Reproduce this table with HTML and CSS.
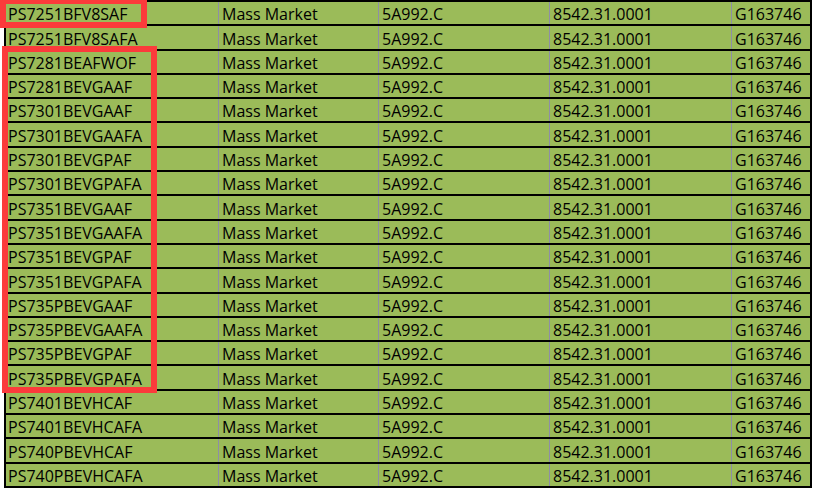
FILE: index.html
```html
<!DOCTYPE html>
<html>
<head>
<meta charset="utf-8">
<link rel="stylesheet" href="styles.css">
</head>
<body>
<div class="page">
  <div class="sheet">
    <div class="row"><div class="c a">PS7251BFV8SAF</div><div class="c">Mass Market</div><div class="c">5A992.C</div><div class="c">8542.31.0001</div><div class="c">G163746</div></div>
    <div class="row"><div class="c a">PS7251BFV8SAFA</div><div class="c">Mass Market</div><div class="c">5A992.C</div><div class="c">8542.31.0001</div><div class="c">G163746</div></div>
    <div class="row"><div class="c a">PS7281BEAFWOF</div><div class="c">Mass Market</div><div class="c">5A992.C</div><div class="c">8542.31.0001</div><div class="c">G163746</div></div>
    <div class="row"><div class="c a">PS7281BEVGAAF</div><div class="c">Mass Market</div><div class="c">5A992.C</div><div class="c">8542.31.0001</div><div class="c">G163746</div></div>
    <div class="row"><div class="c a">PS7301BEVGAAF</div><div class="c">Mass Market</div><div class="c">5A992.C</div><div class="c">8542.31.0001</div><div class="c">G163746</div></div>
    <div class="row"><div class="c a">PS7301BEVGAAFA</div><div class="c">Mass Market</div><div class="c">5A992.C</div><div class="c">8542.31.0001</div><div class="c">G163746</div></div>
    <div class="row"><div class="c a">PS7301BEVGPAF</div><div class="c">Mass Market</div><div class="c">5A992.C</div><div class="c">8542.31.0001</div><div class="c">G163746</div></div>
    <div class="row"><div class="c a">PS7301BEVGPAFA</div><div class="c">Mass Market</div><div class="c">5A992.C</div><div class="c">8542.31.0001</div><div class="c">G163746</div></div>
    <div class="row"><div class="c a">PS7351BEVGAAF</div><div class="c">Mass Market</div><div class="c">5A992.C</div><div class="c">8542.31.0001</div><div class="c">G163746</div></div>
    <div class="row"><div class="c a">PS7351BEVGAAFA</div><div class="c">Mass Market</div><div class="c">5A992.C</div><div class="c">8542.31.0001</div><div class="c">G163746</div></div>
    <div class="row"><div class="c a">PS7351BEVGPAF</div><div class="c">Mass Market</div><div class="c">5A992.C</div><div class="c">8542.31.0001</div><div class="c">G163746</div></div>
    <div class="row"><div class="c a">PS7351BEVGPAFA</div><div class="c">Mass Market</div><div class="c">5A992.C</div><div class="c">8542.31.0001</div><div class="c">G163746</div></div>
    <div class="row"><div class="c a">PS735PBEVGAAF</div><div class="c">Mass Market</div><div class="c">5A992.C</div><div class="c">8542.31.0001</div><div class="c">G163746</div></div>
    <div class="row"><div class="c a">PS735PBEVGAAFA</div><div class="c">Mass Market</div><div class="c">5A992.C</div><div class="c">8542.31.0001</div><div class="c">G163746</div></div>
    <div class="row"><div class="c a">PS735PBEVGPAF</div><div class="c">Mass Market</div><div class="c">5A992.C</div><div class="c">8542.31.0001</div><div class="c">G163746</div></div>
    <div class="row"><div class="c a">PS735PBEVGPAFA</div><div class="c">Mass Market</div><div class="c">5A992.C</div><div class="c">8542.31.0001</div><div class="c">G163746</div></div>
    <div class="row"><div class="c a">PS7401BEVHCAF</div><div class="c">Mass Market</div><div class="c">5A992.C</div><div class="c">8542.31.0001</div><div class="c">G163746</div></div>
    <div class="row"><div class="c a">PS7401BEVHCAFA</div><div class="c">Mass Market</div><div class="c">5A992.C</div><div class="c">8542.31.0001</div><div class="c">G163746</div></div>
    <div class="row"><div class="c a">PS740PBEVHCAF</div><div class="c">Mass Market</div><div class="c">5A992.C</div><div class="c">8542.31.0001</div><div class="c">G163746</div></div>
    <div class="row"><div class="c a">PS740PBEVHCAFA</div><div class="c">Mass Market</div><div class="c">5A992.C</div><div class="c">8542.31.0001</div><div class="c">G163746</div></div>
  </div>
  <div class="mark mark-one"></div>
  <div class="mark mark-two"></div>
</div>
</body>
</html>
```
FILE: styles.css
```css
html, body {
  margin: 0;
  padding: 0;
  background: #ffffff;
}

.page {
  position: relative;
  width: 813px;
  height: 492px;
  overflow: hidden;
}

.sheet {
  margin-left: 4px;
  width: 808px;
  box-sizing: border-box;
  border-left: 2px solid #000;
  border-right: 2px solid #000;
  border-top: 2px solid #000;
  background: #9bbb59;
  font-family: "Open Sans", "Noto Sans", sans-serif;
  font-size: 16px;
  line-height: 20px;
  color: #000;
}

.row {
  display: grid;
  grid-template-columns: 212px 160px 171px 182px 79px;
  height: 24.3px;
  box-sizing: border-box;
  border-bottom: 2px solid #000;
  align-items: end;
}

.c {
  height: 100%;
  box-sizing: border-box;
  display: flex;
  align-items: flex-end;
  padding-left: 3px;
  border-left: 1px solid #8e8ea6;
  white-space: nowrap;
}

.c.a {
  border-left: none;
  padding-left: 2px;
}

.mark {
  position: absolute;
  box-sizing: border-box;
  border: 6px solid #fb3b3b;
}

.mark-one {
  left: 0;
  top: -2px;
  width: 147px;
  height: 30px;
}

.mark-two {
  left: 2px;
  top: 46px;
  width: 155px;
  height: 347px;
}
```
